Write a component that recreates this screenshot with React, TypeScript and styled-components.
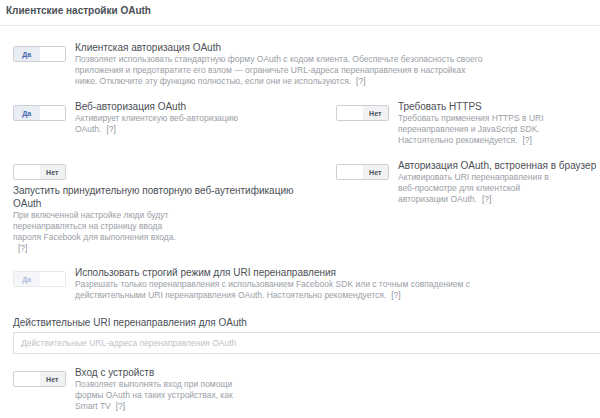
import styled, { createGlobalStyle } from "styled-components";

const GlobalStyle = createGlobalStyle`
  body {
    margin: 0;
    background: #fff;
    font-family: "Liberation Sans", Arial, sans-serif;
  }
`;

type ToggleProps = { on: boolean; disabled?: boolean };

const Toggle = ({ on, disabled }: ToggleProps): JSX.Element => (
  <Switch disabled={disabled}>
    <Half active={on} side="yes">
      {on ? "Да" : ""}
    </Half>
    <Half active={!on} side="no">
      {!on ? "Нет" : ""}
    </Half>
  </Switch>
);

type SettingProps = {
  on: boolean;
  disabled?: boolean;
  title: string;
  text: string;
  wide?: boolean;
};

const Setting = ({ on, disabled, title, text, wide }: SettingProps): JSX.Element => (
  <Item>
    <Toggle on={on} disabled={disabled} />
    <TextBlock>
      <Title>{title}</Title>
      <Desc wide={wide}>
        {text}
        <Help>[?]</Help>
      </Desc>
    </TextBlock>
  </Item>
);

const App = (): JSX.Element => {
  return (
    <Page>
      <GlobalStyle />
      <Header>Клиентские настройки OAuth</Header>
      <Body>
        <Section gap={15}>
          <Setting
            on
            wide
            title="Клиентская авторизация OAuth"
            text="Позволяет использовать стандартную форму OAuth с кодом клиента. Обеспечьте безопасность своего приложения и предотвратите его взлом — ограничьте URL-адреса перенаправления в настройках ниже. Отключите эту функцию полностью, если они не используются."
          />
        </Section>
        <Grid gap={13}>
          <Setting
            on
            title="Веб-авторизация OAuth"
            text="Активирует клиентскую веб-авторизацию OAuth."
          />
          <Setting
            on={false}
            title="Требовать HTTPS"
            text="Требовать применения HTTPS в URI перенаправления и JavaScript SDK. Настоятельно рекомендуется."
          />
        </Grid>
        <Grid gap={13}>
          <Setting
            on={false}
            title="Запустить принудительную повторную веб-аутентификацию OAuth"
            text="При включенной настройке люди будут перенаправляться на страницу ввода пароля Facebook для выполнения входа."
          />
          <Setting
            on={false}
            title="Авторизация OAuth, встроенная в браузер"
            text="Активировать URI перенаправления в веб-просмотре для клиентской авторизации OAuth."
          />
        </Grid>
        <Section gap={12}>
          <Setting
            on
            disabled
            wide
            title="Использовать строгий режим для URI перенаправления"
            text="Разрешать только перенаправления с использованием Facebook SDK или с точным совпадением с действительными URI перенаправления OAuth. Настоятельно рекомендуется."
          />
        </Section>
        <Field>
          <FieldLabel>Действительные URI перенаправления для OAuth</FieldLabel>
          <UriInput placeholder="Действительные URL-адреса перенаправления OAuth" />
        </Field>
        <Section gap={12}>
          <Setting
            on={false}
            title="Вход с устройств"
            text="Позволяет выполнять вход при помощи формы OAuth на таких устройствах, как Smart TV"
          />
        </Section>
      </Body>
    </Page>
  );
};

const Page = styled.div`
  width: 600px;
  height: 418px;
  overflow: hidden;
  background: #fff;
`;

const Header = styled.div`
  padding: 4px 6px 0;
  height: 21px;
  border-bottom: 1px solid #e9ebee;
  color: #4b4f56;
  font-size: 10px;
  font-weight: 700;
  line-height: 13px;
`;

const Body = styled.div`
  padding-left: 13px;
`;

const Section = styled.div<{ gap: number }>`
  margin-top: ${(p) => p.gap}px;
`;

const Grid = styled.div<{ gap: number }>`
  display: grid;
  grid-template-columns: 300px 1fr;
  column-gap: 23px;
  align-items: start;
  margin-top: ${(p) => p.gap}px;
`;

const Item = styled.div`
  display: flex;
  flex-wrap: wrap;
  align-items: flex-start;
  column-gap: 9px;
  row-gap: 4px;
`;

const Switch = styled.div<{ disabled?: boolean }>`
  display: flex;
  flex: none;
  width: 53px;
  height: 16px;
  margin-top: 5px;
  box-sizing: border-box;
  border: 1px solid #ccd0d5;
  border-radius: 2px;
  overflow: hidden;
  opacity: ${(p) => (p.disabled ? 0.45 : 1)};
`;

const Half = styled.div<{ active: boolean; side: "yes" | "no" }>`
  flex: 1;
  display: flex;
  align-items: center;
  justify-content: center;
  font-size: 7px;
  font-weight: 700;
  background: ${(p) =>
    !p.active ? "#fff" : p.side === "yes" ? "#e9edf4" : "#f1f2f4"};
  color: ${(p) => (p.side === "yes" ? "#4267b2" : "#4b4f56")};
`;

const TextBlock = styled.div`
  display: flex;
  flex-direction: column;
`;

const Title = styled.div`
  color: #4b4f56;
  font-size: 10px;
  line-height: 13px;
`;

const Desc = styled.div<{ wide?: boolean }>`
  max-width: ${(p) => (p.wide ? "410px" : "166px")};
  color: #9a9ea6;
  font-size: 8.5px;
  line-height: 11px;
`;

const Help = styled.span`
  margin-left: 5px;
  color: #8d949e;
`;

const Field = styled.div`
  display: flex;
  flex-direction: column;
  gap: 3px;
  margin-top: 15px;
`;

const FieldLabel = styled.div`
  color: #4b4f56;
  font-size: 10px;
  line-height: 13px;
`;

const UriInput = styled.input`
  width: calc(100% + 6px);
  height: 22px;
  box-sizing: border-box;
  border: 1px solid #dddfe2;
  padding: 0 7px;
  font-family: inherit;
  font-size: 8.5px;
  color: #4b4f56;
  outline: none;

  &::placeholder {
    color: #bec3c9;
  }
`;

export default App;
